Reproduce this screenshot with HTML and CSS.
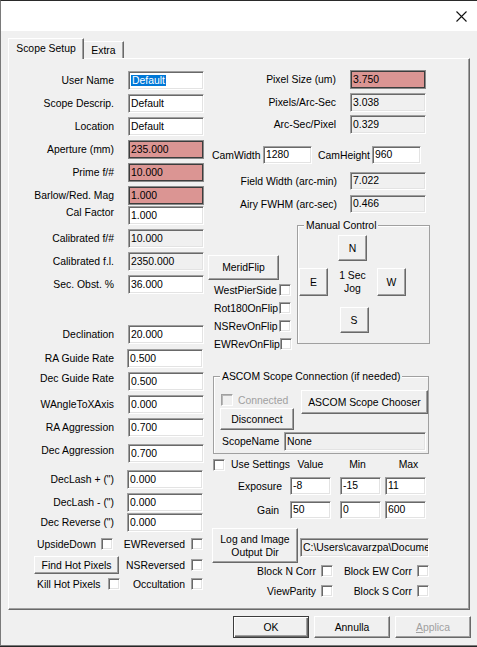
FILE: index.html
```html
<!DOCTYPE html>
<html>
<head>
<meta charset="utf-8">
<title>Scope Setup</title>
<link rel="stylesheet" href="styles.css">
</head>
<body>
<div class="window">
  <div class="titlebar">
    <svg class="close" width="11" height="11" viewBox="0 0 11 11"><path d="M0.5 0.5 L10.5 10.5 M10.5 0.5 L0.5 10.5" stroke="#111" stroke-width="1.1" fill="none"/></svg>
  </div>
  <div class="client">
    <div class="tabs">
      <div class="tab active">Scope Setup</div>
      <div class="tab">Extra</div>
    </div>
    <div class="panel">
      <div class="col-left">
        <div class="row first"><span class="lbl">User Name</span><div class="tb"><span class="sel">Default</span></div></div>
        <div class="row"><span class="lbl">Scope Descrip.</span><div class="tb">Default</div></div>
        <div class="row"><span class="lbl">Location</span><div class="tb">Default</div></div>
        <div class="row"><span class="lbl">Aperture (mm)</span><div class="tb hl">235.000</div></div>
        <div class="row"><span class="lbl">Prime f/#</span><div class="tb hl">10.000</div></div>
        <div class="row"><span class="lbl">Barlow/Red. Mag</span><div class="tb hl">1.000</div></div>
        <div class="row g1"><span class="lbl up">Cal Factor</span><div class="tb">1.000</div></div>
        <div class="row"><span class="lbl">Calibrated f/#</span><div class="tb ro">10.000</div></div>
        <div class="row"><span class="lbl">Calibrated f.l.</span><div class="tb ro">2350.000</div></div>
        <div class="row"><span class="lbl">Sec. Obst. %</span><div class="tb">36.000</div></div>
        <div class="row g31"><span class="lbl">Declination</span><div class="tb">20.000</div></div>
        <div class="row g5"><span class="lbl">RA Guide Rate</span><div class="tb sh">0.500</div></div>
        <div class="row"><span class="lbl up">Dec Guide Rate</span><div class="tb">0.500</div></div>
        <div class="row"><span class="lbl">WAngleToXAxis</span><div class="tb">0.000</div></div>
        <div class="row"><span class="lbl">RA Aggression</span><div class="tb">0.700</div></div>
        <div class="row g7"><span class="lbl up">Dec Aggression</span><div class="tb">0.700</div></div>
        <div class="row g7"><span class="lbl">DecLash + (")</span><div class="tb sh">0.000</div></div>
        <div class="row"><span class="lbl">DecLash - (")</span><div class="tb sh">0.000</div></div>
        <div class="row g1"><span class="lbl">Dec Reverse (")</span><div class="tb sh">0.000</div></div>

        <div class="crow c1">
          <div class="ccell"><span class="ct">UpsideDown</span><span class="cb gap5"></span></div>
          <div class="ccell right"><span class="ct">EWReversed</span><span class="cb gap6"></span></div>
        </div>
        <div class="crow c2">
          <div class="ccell"><div class="btn hot">Find Hot Pixels</div></div>
          <div class="ccell right"><span class="ct">NSReversed</span><span class="cb gap6"></span></div>
        </div>
        <div class="crow c3">
          <div class="ccell"><span class="ct">Kill Hot Pixels</span><span class="cb gap7"></span></div>
          <div class="ccell right"><span class="ct">Occultation</span><span class="cb gap6"></span></div>
        </div>
      </div>

      <div class="col-right">
        <div class="rrow"><span class="rlbl">Pixel Size (um)</span><div class="tb hl rin">3.750</div></div>
        <div class="rrow m4"><span class="rlbl">Pixels/Arc-Sec</span><div class="tb ro rin">3.038</div></div>
        <div class="rrow m3"><span class="rlbl">Arc-Sec/Pixel</span><div class="tb ro rin">0.329</div></div>

        <div class="camrow">
          <span class="camlbl">CamWidth</span><div class="tb camin">1280</div>
          <span class="camlbl2">CamHeight</span><div class="tb camin">960</div>
        </div>

        <div class="rrow short m8"><span class="rlbl w131">Field Width (arc-min)</span><div class="tb ro rin">7.022</div></div>
        <div class="rrow short m5"><span class="rlbl w131">Airy FWHM (arc-sec)</span><div class="tb ro rin">0.466</div></div>

        <div class="flipblock">
          <div class="flipcol">
            <div class="btn merid">MeridFlip</div>
            <div class="frow first"><span class="flbl">WestPierSide</span><span class="cb"></span></div>
            <div class="frow"><span class="flbl">Rot180OnFlip</span><span class="cb"></span></div>
            <div class="frow"><span class="flbl">NSRevOnFlip</span><span class="cb"></span></div>
            <div class="frow"><span class="flbl">EWRevOnFlip</span><span class="cb"></span></div>
          </div>
          <div class="group manual">
            <span class="gtitle">Manual Control</span>
            <div class="jog">
              <div class="btn jb n">N</div>
              <div class="btn jb e">E</div>
              <div class="jogtxt">1 Sec<br>Jog</div>
              <div class="btn jb w">W</div>
              <div class="btn jb s">S</div>
            </div>
          </div>
        </div>

        <div class="group ascom">
          <span class="gtitle">ASCOM Scope Connection (if needed)</span>
          <div class="ascomtop">
            <div class="ascomleft">
              <div class="connrow"><span class="cb dis"></span><span class="distext">Connected</span></div>
              <div class="btn disc">Disconnect</div>
            </div>
            <div class="btn chooser">ASCOM Scope Chooser</div>
          </div>
          <div class="scoperow"><span class="snlbl">ScopeName</span><div class="tb ro snin">None</div></div>
        </div>

        <div class="settings">
          <div class="usecell"><span class="cb"></span><span class="usetxt">Use Settings</span></div>
          <div class="hdr">Value</div>
          <div class="hdr hmin">Min</div>
          <div class="hdr hmax">Max</div>
          <div class="slbl">Exposure</div>
          <div class="tb sin">-8</div>
          <div class="tb sin">-15</div>
          <div class="tb sin">11</div>
          <div class="slbl gain">Gain</div>
          <div class="tb sin">50</div>
          <div class="tb sin">0</div>
          <div class="tb sin">600</div>
        </div>

        <div class="logrow">
          <div class="btn logbtn">Log and Image<br>Output Dir</div>
          <div class="tb ro path">C:\Users\cavarzpa\Documents\PHD2</div>
        </div>

        <div class="brow b1">
          <div class="bcell"><span class="ct">Block N Corr</span><span class="cb gap5"></span></div>
          <div class="bcell"><span class="ct">Block EW Corr</span><span class="cb gap5"></span></div>
        </div>
        <div class="brow b2">
          <div class="bcell"><span class="ct">ViewParity</span><span class="cb gap5"></span></div>
          <div class="bcell"><span class="ct">Block S Corr</span><span class="cb gap5"></span></div>
        </div>
      </div>
    </div>

    <div class="buttons">
      <div class="btn dlg default">OK</div>
      <div class="btn dlg">Annulla</div>
      <div class="btn dlg disabled"><span><u>A</u>pplica</span></div>
    </div>
  </div>
</div>
</body>
</html>
```

FILE: styles.css
```css
* { box-sizing: border-box; }

body {
  margin: 0;
  width: 477px;
  height: 647px;
  overflow: hidden;
  background: #262626;
  font-family: "Liberation Sans", Arial, sans-serif;
  font-size: 10.4px;
  line-height: 13px;
  color: #000;
}

.window {
  width: 477px;
  height: 646px;
  background: #f0f0f0;
  border-top: 1px solid #2a2a2a;
  border-left: 1px solid #7a7a7a;
  border-bottom: 1px solid #7a7a7a;
}

.titlebar {
  height: 30px;
  background: #fff;
  display: flex;
  justify-content: flex-end;
  align-items: center;
  padding-right: 10px;
}

.client {
  padding: 7px 0 0 7px;
}

/* tabs */
.tabs {
  display: flex;
  align-items: flex-end;
  height: 20px;
}
.tab {
  height: 17px;
  width: 40px;
  padding-top: 2px;
  text-align: center;
  background: #f0f0f0;
  border-top: 1px solid #fff;
  border-right: 1px solid #696969;
  box-shadow: inset -1px 0 0 #a0a0a0;
}
.tab.active {
  position: relative;
  z-index: 1;
  width: 76px;
  height: 21px;
  margin-bottom: -1px;
  padding-top: 3px;
  border-left: 1px solid #fff;
}

.panel {
  width: 462px;
  height: 552px;
  display: flex;
  border: 1px solid;
  border-color: #fff #696969 #696969 #fff;
  box-shadow: inset -1px -1px 0 #a0a0a0;
}

/* text boxes */
.tb {
  height: 19px;
  width: 76px;
  padding-left: 2px;
  line-height: 17px;
  white-space: nowrap;
  overflow: hidden;
  background: #fff;
  border-top: 1px solid #a0a0a0;
  border-left: 1px solid #a0a0a0;
  border-right: 1px solid #fff;
  border-bottom: 1px solid #fff;
  box-shadow: inset 1px 1px 0 #696969, inset -1px -1px 0 #e3e3e3;
}
.tb.ro { background: #f0f0f0; }
.tb.hl {
  background: #db9593;
  border: 1px solid #8a8a8a;
  box-shadow: inset 0 0 0 1px #3c3c3c;
}
.sel {
  background: #0078d7;
  color: #fff;
  padding: 0 1px;
}

/* buttons */
.btn {
  display: flex;
  align-items: center;
  justify-content: center;
  text-align: center;
  background: #f0f0f0;
  border: 1px solid;
  border-color: #fff #696969 #696969 #fff;
  box-shadow: inset -1px -1px 0 #a0a0a0;
  white-space: nowrap;
}

/* checkboxes */
.cb {
  display: inline-block;
  flex: none;
  width: 12px;
  height: 12px;
  background: #fff;
  border-top: 1px solid #a0a0a0;
  border-left: 1px solid #a0a0a0;
  border-right: 1px solid #fff;
  border-bottom: 1px solid #fff;
  box-shadow: inset 1px 1px 0 #696969, inset -1px -1px 0 #e3e3e3;
}
.cb.dis {
  background: #f0f0f0;
  box-shadow: inset 1px 1px 0 #b8b8b8;
}
.gap5 { margin-left: 5px; }
.gap6 { margin-left: 6px; }
.gap7 { margin-left: 7px; }
.ct { white-space: nowrap; }

/* left column */
.col-left {
  width: 197px;
  flex: none;
  padding-top: 12px;
}
.row {
  display: flex;
  align-items: center;
  height: 19px;
  margin-top: 4px;
}
.row.first { margin-top: 0; }
.row.g1 { margin-top: 1px; }
.row.g5 { margin-top: 5px; }
.row.g7 { margin-top: 7px; }
.row.g31 { margin-top: 31px; }
.lbl {
  width: 105px;
  text-align: right;
  white-space: nowrap;
}
.lbl.up { align-self: flex-start; }
.row .tb { margin-left: 14px; }
.row .tb.sh { margin-left: 13px; }

.crow {
  display: flex;
  margin-left: 25px;
  width: 170px;
}
.crow.c1 { margin-top: 6px; height: 12px; }
.crow.c2 { margin-top: 6px; height: 18px; }
.crow.c3 { margin-top: 4px; height: 12px; }
.ccell {
  width: 85px;
  display: flex;
  align-items: center;
  padding-left: 3px;
}
.ccell.right {
  justify-content: flex-end;
  padding-left: 0;
  padding-right: 1px;
}
.btn.hot {
  width: 85px;
  height: 18px;
  margin-left: -3px;
}

/* right column */
.col-right {
  flex: 1;
  padding-top: 11px;
}
.rrow {
  display: flex;
  align-items: center;
  height: 19px;
}
.rrow.short { height: 18px; }
.rrow.short .tb { height: 18px; line-height: 16px; }
.m3 { margin-top: 3px; }
.m4 { margin-top: 4px; }
.m5 { margin-top: 5px; }
.m8 { margin-top: 8px; }
.rlbl {
  width: 130px;
  text-align: right;
  white-space: nowrap;
}
.rlbl.w131 { width: 131px; }
.rin { margin-left: 14px; }
.rlbl.w131 + .rin { margin-left: 13px; }

.camrow {
  display: flex;
  align-items: center;
  height: 18px;
  margin-top: 12px;
  padding-left: 6px;
}
.camlbl { width: 51px; white-space: nowrap; }
.camlbl2 { width: 60px; padding-left: 6px; white-space: nowrap; }
.tb.camin { width: 49px; height: 18px; line-height: 16px; }

.flipblock {
  display: flex;
  align-items: flex-start;
  margin-top: 12px;
}
.flipcol {
  width: 83px;
  margin-left: 2px;
  padding-top: 30px;
}
.btn.merid {
  width: 71px;
  height: 25px;
}
.frow {
  display: flex;
  align-items: center;
  height: 18px;
}
.frow.first { margin-top: 1px; }
.flbl {
  width: 72px;
  padding-left: 6px;
  white-space: nowrap;
}

.group {
  position: relative;
  border: 1px solid #a0a0a0;
  box-shadow: inset 1px 1px 0 #fff;
}
.gtitle {
  position: absolute;
  top: -7px;
  left: 6px;
  padding: 0 2px;
  background: #f0f0f0;
  white-space: nowrap;
}
.group.manual {
  width: 133px;
  height: 119px;
  margin-left: 6px;
}
.jog {
  display: grid;
  grid-template-columns: 29px 49px 29px;
  grid-template-rows: 26px 7px 28px 11px 26px;
  padding: 9px 0 0 1px;
}
.btn.jb { width: 29px; }
.jb.n { grid-column: 2; grid-row: 1; justify-self: center; }
.jb.e { grid-column: 1; grid-row: 3; }
.jb.w { grid-column: 3; grid-row: 3; }
.jb.s { grid-column: 2; grid-row: 5; justify-self: center; margin-left: 3px; }
.jogtxt {
  grid-column: 2;
  grid-row: 3;
  align-self: center;
  text-align: center;
}

.group.ascom {
  width: 216px;
  height: 78px;
  margin-top: 23px;
  margin-left: 7px;
  padding: 13px 0 0 6px;
}
.ascomtop {
  display: flex;
  align-items: flex-start;
}
.ascomleft {
  width: 74px;
  padding-top: 4px;
}
.connrow {
  display: flex;
  align-items: center;
  height: 12px;
  padding-left: 1px;
}
.distext {
  margin-left: 5px;
  color: #a0a0a0;
}
.btn.disc {
  margin-top: 2px;
  width: 74px;
  height: 22px;
}
.btn.chooser {
  width: 127px;
  height: 24px;
  margin-left: 7px;
}
.scoperow {
  display: flex;
  align-items: center;
  margin-top: 2px;
}
.snlbl {
  width: 64px;
  padding-left: 2px;
  white-space: nowrap;
}
.tb.snin { width: 142px; }

.settings {
  display: grid;
  grid-template-columns: 84px 50px 45px 41px;
  grid-template-rows: 13px 18px 18px;
  row-gap: 6px;
  margin-top: 4px;
  align-items: center;
}
.usecell {
  display: flex;
  align-items: center;
  padding-left: 7px;
  height: 13px;
}
.usetxt { margin-left: 6px; white-space: nowrap; }
.hdr { text-align: center; width: 41px; }
.hdr.hmin { width: 45px; padding-right: 10px; }
.hdr.hmax { padding-left: 6px; }
.slbl { text-align: right; padding-right: 8px; }
.slbl.gain { padding-right: 11px; }
.tb.sin { width: 41px; height: 18px; line-height: 16px; }

.logrow {
  display: flex;
  align-items: flex-start;
  margin-top: 9px;
  padding-left: 6px;
}
.btn.logbtn {
  width: 86px;
  height: 35px;
  line-height: 13px;
}
.tb.path {
  width: 129px;
  margin-left: 2px;
  margin-top: 10px;
}

.brow {
  display: flex;
  height: 12px;
}
.brow.b1 { margin-top: 2px; }
.brow.b2 { margin-top: 8px; }
.bcell {
  display: flex;
  align-items: center;
  justify-content: flex-end;
}
.bcell:first-child { width: 127px; }
.bcell:last-child { width: 96px; }

/* dialog buttons */
.buttons {
  display: flex;
  justify-content: flex-end;
  gap: 5px;
  margin-top: 6px;
  padding-right: 6px;
}
.btn.dlg {
  width: 76px;
  height: 22px;
}
.btn.default {
  border: 1px solid #3c3c3c;
  box-shadow: inset 1px 1px 0 #fff, inset -1px -1px 0 #696969, inset -2px -2px 0 #a0a0a0;
}
.btn.disabled { color: #a0a0a0; }
```
